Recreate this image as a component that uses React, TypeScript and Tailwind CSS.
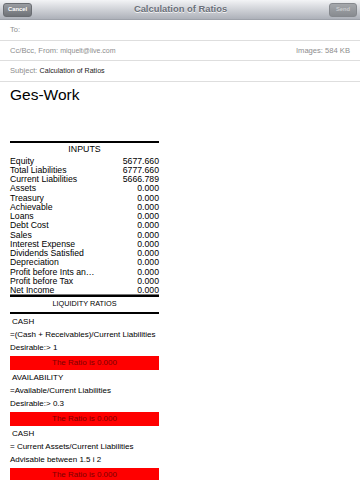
const INPUTS: [string, string][] = [
  ["Equity", "5677.660"],
  ["Total Liabilities", "6777.660"],
  ["Current Liabilities", "5666.789"],
  ["Assets", "0.000"],
  ["Treasury", "0.000"],
  ["Achievable", "0.000"],
  ["Loans", "0.000"],
  ["Debt Cost", "0.000"],
  ["Sales", "0.000"],
  ["Interest Expense", "0.000"],
  ["Dividends Satisfied", "0.000"],
  ["Depreciation", "0.000"],
  ["Profit before Ints an…", "0.000"],
  ["Profit before Tax", "0.000"],
  ["Net Income", "0.000"],
];

const RATIOS = [
  { title: "CASH", formula: "=(Cash + Receivables)/Current Liabilities", note: "Desirable:> 1" },
  { title: "AVAILABILITY", formula: "=Available/Current Liabilities", note: "Desirable:> 0.3" },
  { title: "CASH", formula: "= Current Assets/Current Liabilities", note: "Advisable between 1.5 i 2" },
];

const font = { fontFamily: '"Liberation Sans", Arial, sans-serif' };

export default function App() {
  return (
    <div className="h-[480px] w-[360px] overflow-hidden bg-white" style={font}>
      {/* nav bar */}
      <div className="flex h-[20px] items-center justify-between border-b border-[#9ea2aa] bg-gradient-to-b from-[#f3f4f6] to-[#adb1b9] px-[3px]">
        <div className="flex h-[14px] w-[29px] items-center justify-center rounded-[3px] border border-[#6a6d72] bg-gradient-to-b from-[#9a9da2] to-[#6f7277] text-[5.8px] font-bold text-white">
          Cancel
        </div>
        <div className="text-[9.4px] font-bold text-[#6b707a] [text-shadow:0_1px_0_#f4f4f4]">
          Calculation of Ratios
        </div>
        <div className="flex h-[14px] w-[28px] items-center justify-center rounded-[3px] border border-[#85888d] bg-gradient-to-b from-[#a4a7ab] to-[#888b90] text-[5.8px] font-bold text-[#c9cbce]">
          Send
        </div>
      </div>

      {/* mail header rows */}
      <div className="flex h-[21px] items-center border-b border-[#dedede] px-[10px] text-[7.5px] text-[#8d8d8d]">
        To:
      </div>
      <div className="flex h-[20px] items-center justify-between border-b border-[#dedede] px-[10px] text-[7.6px] text-[#8d8d8d]">
        <span>
          Cc/Bcc, From: <span className="text-[7px]">miquelt@live.com</span>
        </span>
        <span>Images: 584 KB</span>
      </div>
      <div className="flex h-[21px] items-center border-b border-[#dedede] px-[10px] text-[7.6px] text-[#8d8d8d]">
        Subject:&nbsp;<span className="text-[7.1px] text-[#222]">Calculation of Ratios</span>
      </div>

      {/* body */}
      <div className="pl-[10px] pt-[4px]">
        <div className="text-[15.5px] leading-[18px] text-black">Ges-Work</div>

        <div className="mt-[37px] w-[149px] text-black">
          <div className="h-[2px] bg-black" />
          <div className="flex h-[13.4px] items-center justify-center text-[8.8px]">INPUTS</div>
          {INPUTS.map(([label, value], i) => (
            <div
              key={label}
              className={
                "flex h-[9.25px] items-center justify-between text-[8.7px] leading-none" +
                (i === INPUTS.length - 1 ? " border-b border-[#777]" : "")
              }
            >
              <span>{label}</span>
              <span>{value}</span>
            </div>
          ))}
          <div className="h-[2px] bg-black" />
          <div className="flex h-[15px] items-center justify-center text-[7.3px]">LIQUIDITY RATIOS</div>
          <div className="h-[2px] bg-black" />

          {RATIOS.map((r, i) => (
            <div key={i} className="pt-[1.5px] text-[8px]">
              <div className="flex h-[13px] items-center pl-[2px]">{r.title}</div>
              <div className="flex h-[13px] items-center">{r.formula}</div>
              <div className="flex h-[13px] items-center">{r.note}</div>
              <div className="mt-[1.5px] flex h-[14px] items-center justify-center bg-[#ff0000] text-[8px] text-[#7d0000]">
                The Ratio is 0.000
              </div>
            </div>
          ))}
        </div>
      </div>
    </div>
  );
}
